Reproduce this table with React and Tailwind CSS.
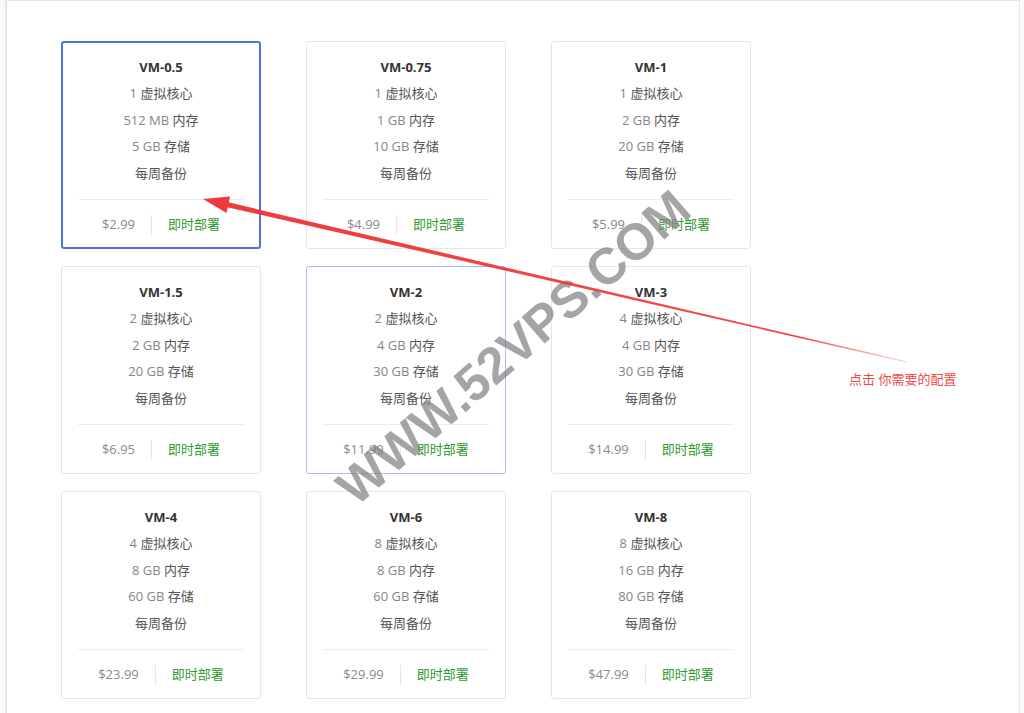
import React from 'react';

const plans = [
    { name: 'VM-0.5', cpu: '1', ram: '512 MB', disk: '5 GB', price: '$2.99' },
    { name: 'VM-0.75', cpu: '1', ram: '1 GB', disk: '10 GB', price: '$4.99' },
    { name: 'VM-1', cpu: '1', ram: '2 GB', disk: '20 GB', price: '$5.99' },
    { name: 'VM-1.5', cpu: '2', ram: '2 GB', disk: '20 GB', price: '$6.95' },
    { name: 'VM-2', cpu: '2', ram: '4 GB', disk: '30 GB', price: '$11.99' },
    { name: 'VM-3', cpu: '4', ram: '4 GB', disk: '30 GB', price: '$14.99' },
    { name: 'VM-4', cpu: '4', ram: '8 GB', disk: '60 GB', price: '$23.99' },
    { name: 'VM-6', cpu: '8', ram: '8 GB', disk: '60 GB', price: '$29.99' },
    { name: 'VM-8', cpu: '8', ram: '16 GB', disk: '80 GB', price: '$47.99' },
];

const Spec = ({ value, label }) => (
    <div className="h-[26.5px] leading-[26.5px]">
        {value && <span className="text-[#8a8580]">{value} </span>}
        <span className="text-[#555]">{label}</span>
    </div>
);

const PlanCard = ({ plan, variant }) => {
    const border =
        variant === 'active'
            ? 'border-2 border-[#4e72e6]'
            : variant === 'hover'
                ? 'border border-[#aab9f5]'
                : 'border border-[#e6e6e6]';

    return (
        <div className={`h-[208px] rounded-[3px] bg-white flex flex-col text-center ${border}`}>
            <div className={variant === 'active' ? 'pt-[11px]' : 'pt-[12px]'}>
                <div className="h-[26px] leading-[26px] font-bold text-[#333]">{plan.name}</div>
                <Spec value={plan.cpu} label="虚拟核心" />
                <Spec value={plan.ram} label="内存" />
                <Spec value={plan.disk} label="存储" />
                <Spec label="每周备份" />
            </div>
            <div className="mx-4 mt-[13px] h-px bg-[#ececec]" />
            <div className="flex-1 flex items-center justify-center pt-[2px]">
                <span className="text-[#8a8a8a]">{plan.price}</span>
                <span className="mx-4 w-px h-[20px] bg-[#e6e6e6]" />
                <span className="text-[#2f9a2f]">即时部署</span>
            </div>
        </div>
    );
};

// Red annotation arrow drawn over the cards
const Arrow = () => (
    <svg className="absolute left-0 top-0 pointer-events-none" width="1024" height="713" viewBox="0 0 1024 713">
        <defs>
            <linearGradient id="fade" x1="203" y1="199" x2="907" y2="362" gradientUnits="userSpaceOnUse">
                <stop offset="0" stopColor="#f03a3a" stopOpacity="1" />
                <stop offset="0.85" stopColor="#f03a3a" stopOpacity="0.9" />
                <stop offset="1" stopColor="#f03a3a" stopOpacity="0.25" />
            </linearGradient>
        </defs>
        <polygon points="223.8,206.4 225,201.6 907.1,361.5 906.9,362.5" fill="url(#fade)" />
        <polygon points="203,199 230.1,196.6 226.5,212.9" fill="#f03a3a" />
    </svg>
);

const App = () => {
    return (
        <div
            className="relative w-[1024px] h-[713px] bg-[#fafafa] overflow-hidden text-[13px]"
            style={{ fontFamily: '"Open Sans", "Noto Sans CJK SC", sans-serif' }}
        >
            <div className="ml-[5px] w-[1015px] h-[713px] bg-white border-l-2 border-t border-r border-[#e6e6e6]">
                <div className="pl-[54px] pt-[40px] grid grid-cols-[200px_200px_200px] grid-rows-[208px_208px_208px] gap-x-[45px] gap-y-[17px]">
                    {plans.map((plan, i) => (
                        <PlanCard
                            key={plan.name}
                            plan={plan}
                            variant={i === 0 ? 'active' : i === 4 ? 'hover' : 'default'}
                        />
                    ))}
                </div>
            </div>

            {/* Watermark */}
            <div
                className="absolute left-[514px] top-[348px] -translate-x-1/2 -translate-y-1/2 rotate-[-41deg] whitespace-nowrap text-[51px] font-bold text-[#808080] opacity-70"
                style={{ fontFamily: '"Liberation Sans", Arial, sans-serif', textShadow: '0 0 2px #fff' }}
            >
                WWW.52VPS.COM
            </div>

            <Arrow />

            <div className="absolute left-[849px] top-[370px] text-[13px] text-[#f04848]">点击 你需要的配置</div>
        </div>
    );
};

export default App;
